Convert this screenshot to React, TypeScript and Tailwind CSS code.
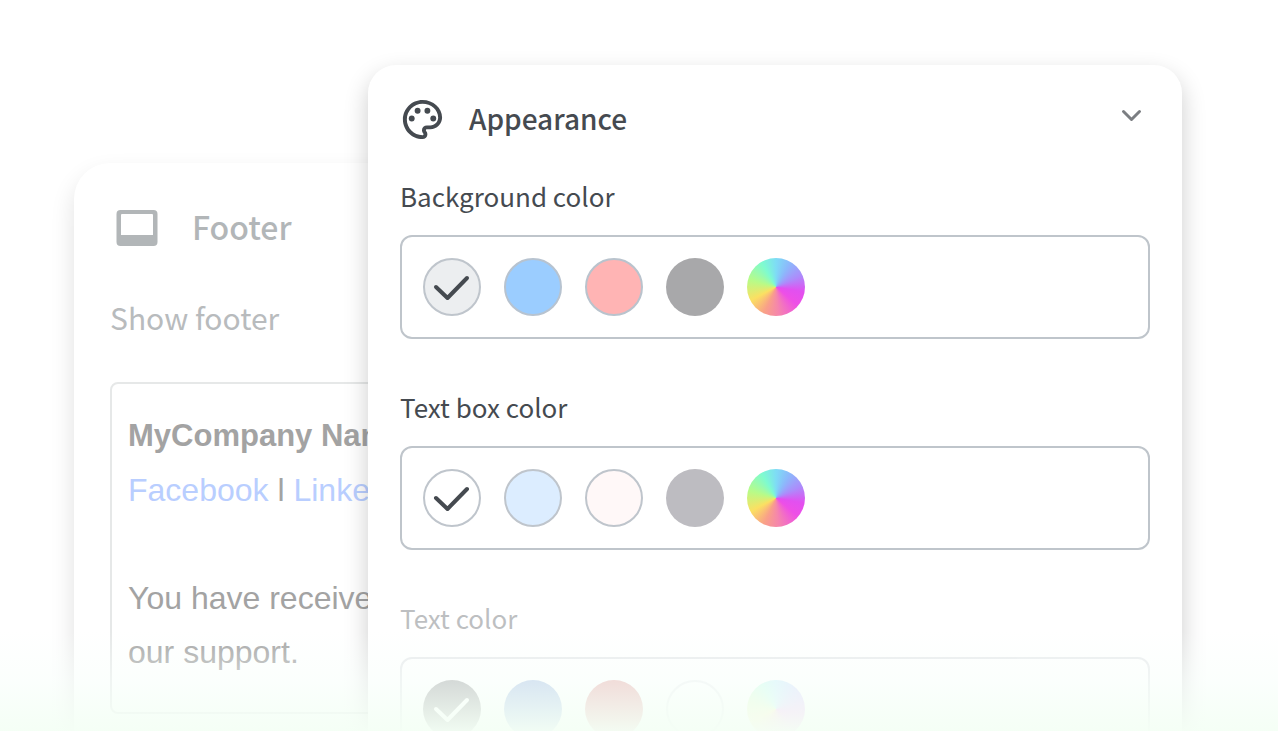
import { MdOutlinePalette } from "react-icons/md";

type Swatch = { name: string; style: string };

type ColorGroup = {
  id: string;
  label: string;
  faded?: boolean;
  checkStyle: string;
  swatches: Swatch[];
};

const wheel =
  "bg-[conic-gradient(#7edcf5,#8cb8fb_30deg,#ac8cfb_65deg,#e250f0_100deg,#ee4fe6_130deg,#f586ac_175deg,#f9a088_205deg,#fbe062_242deg,#b8fb88_285deg,#7efbd0_330deg,#7edcf5)]";

const groups: ColorGroup[] = [
  {
    id: "background",
    label: "Background color",
    checkStyle: "text-[#454a50]",
    swatches: [
      { name: "Light gray", style: "border-2 border-[#bfc5cc] bg-[#eceef0]" },
      { name: "Blue", style: "border-2 border-[#b7c3d0] bg-[#9bcdff]" },
      { name: "Pink", style: "border-2 border-[#b9c3cd] bg-[#ffb4b4]" },
      { name: "Gray", style: "bg-[#a8a8aa]" },
      { name: "Custom", style: wheel },
    ],
  },
  {
    id: "text-box",
    label: "Text box color",
    checkStyle: "text-[#454a50]",
    swatches: [
      { name: "White", style: "border-2 border-[#bfc5cc] bg-white" },
      { name: "Pale blue", style: "border-2 border-[#bfc5cc] bg-[#dcedff]" },
      { name: "Pale pink", style: "border-2 border-[#bfc5cc] bg-[#fff8f8]" },
      { name: "Gray", style: "bg-[#bdbcc1]" },
      { name: "Custom", style: wheel },
    ],
  },
  {
    id: "text",
    label: "Text color",
    faded: true,
    checkStyle: "text-white",
    swatches: [
      { name: "Black", style: "bg-[#101414]" },
      { name: "Navy", style: "bg-[#2464bc]" },
      { name: "Red", style: "bg-[#c02c24]" },
      { name: "White", style: "border-2 border-[#d5dadd] bg-white" },
      { name: "Custom", style: wheel },
    ],
  },
];

function ColorPicker({ group }: { group: ColorGroup }) {
  return (
    <fieldset className={group.faded ? "opacity-35" : ""}>
      <legend className="mb-[22px] text-[26px] leading-[34px] text-[#454a50]">{group.label}</legend>
      <div className="flex gap-[23px] rounded-xl border-2 border-[#bfc5cb] p-[21px]">
        {group.swatches.map((swatch, i) => (
          <label key={swatch.name} className="relative size-[58px]">
            <input
              type="radio"
              name={group.id}
              aria-label={swatch.name}
              defaultChecked={i === 0}
              className={`peer block size-[58px] appearance-none rounded-full ${swatch.style}`}
            />
            <svg
              viewBox="0 0 58 58"
              fill="none"
              stroke="currentColor"
              strokeWidth="4"
              strokeLinecap="round"
              strokeLinejoin="round"
              aria-hidden="true"
              className={`pointer-events-none absolute inset-0 hidden peer-checked:block ${group.checkStyle}`}
            >
              <path d="M13 29l11.5 11L44 20" />
            </svg>
          </label>
        ))}
      </div>
    </fieldset>
  );
}

function FooterPanel() {
  return (
    <section className="mt-[163px] w-[440px] shrink-0 rounded-t-[36px] bg-white px-9 pt-10 shadow-[0_12px_24px_rgba(0,0,0,0.12)]">
      <header className="flex h-[50px] items-center gap-[34px] pl-[6px] text-[#b2b6b8]">
        <svg viewBox="0 0 42 36" className="h-9 w-[42px]" fill="currentColor" aria-hidden="true">
          <path
            fillRule="evenodd"
            d="M4.500 0h33a4 4 0 0 1 4 4v28a4 4 0 0 1-4 4h-33a4 4 0 0 1-4-4V4a4 4 0 0 1 4-4zM6 4a1 1 0 0 0-1 1v20h32V5a1 1 0 0 0-1-1z"
          />
        </svg>
        <h2 className="pb-1 text-[32px] font-medium">Footer</h2>
      </header>
      <p className="mt-[42px] text-[30px] leading-[44px] text-[#b8bbbd]">Show footer</p>
      <div className="mt-[43px] h-[332px] overflow-hidden rounded-lg border-2 border-[#e6e8e8] px-4 pt-[25px] font-['Liberation_Sans',sans-serif] text-[32px] leading-[54px] whitespace-nowrap text-[#a3a3a3]">
        <p className="text-[31px] font-bold">MyCompany Name</p>
        <p>
          <a href="#facebook" className="text-[#b9ceff]">Facebook</a> l{" "}
          <a href="#linkedin" className="text-[#b9ceff]">LinkedIn</a>
        </p>
        <p className="mt-[54px]">
          You have received
          <br />
          our support.
        </p>
      </div>
    </section>
  );
}

function AppearancePanel() {
  return (
    <section className="relative mt-[65px] mr-24 -ml-[146px] min-w-0 flex-1 rounded-t-[28px] bg-white px-8 pt-[30px] shadow-[0_10px_24px_rgba(0,0,0,0.2)]">
      <header className="flex h-12 items-center text-[#454a50]">
        <MdOutlinePalette className="-ml-px size-[47px]" aria-hidden="true" />
        <h2 className="ml-[23px] pb-[2px] text-[28px] font-medium">Appearance</h2>
        <button type="button" aria-label="Collapse" className="mb-2 ml-auto p-2 text-[#7b7e82]">
          <svg
            viewBox="0 0 22 22"
            className="size-[22px]"
            fill="none"
            stroke="currentColor"
            strokeWidth="3"
            strokeLinecap="round"
            strokeLinejoin="round"
          >
            <path d="M3.500 7.500l8 8 8-8" />
          </svg>
        </button>
      </header>
      <div className="mt-9 flex flex-col gap-[51px]">
        {groups.map((group) => (
          <ColorPicker key={group.id} group={group} />
        ))}
      </div>
    </section>
  );
}

export default function App() {
  return (
    <main className="relative flex h-screen overflow-hidden bg-white pl-[74px] font-['Noto_Sans_CJK_SC',sans-serif]">
      <FooterPanel />
      <AppearancePanel />
      <div className="pointer-events-none absolute inset-x-0 bottom-0 h-[100px] bg-linear-to-b from-[#f3fff5]/0 via-[#f8fffb]/55 to-[#f4fff5]/95" />
    </main>
  );
}
